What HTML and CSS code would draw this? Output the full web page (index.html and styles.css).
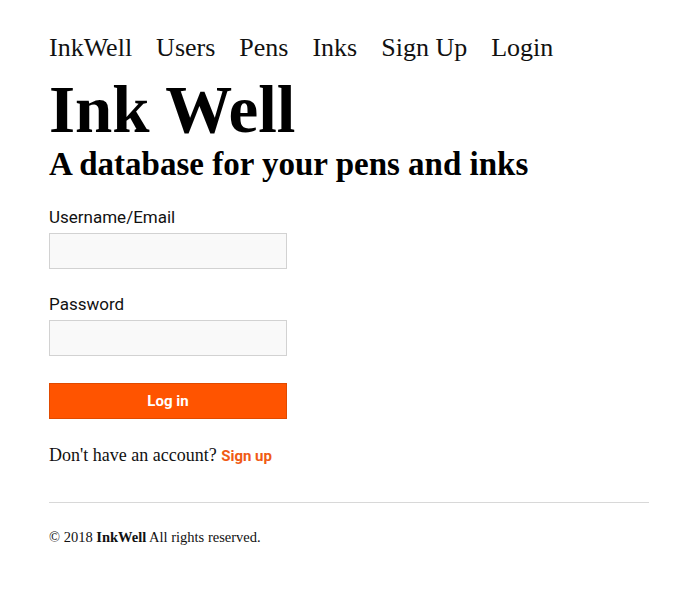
FILE: index.html
```html
<!DOCTYPE html>
<html lang="en">
<head>
<meta charset="utf-8">
<title>InkWell</title>
<link rel="stylesheet" href="styles.css">
</head>
<body>
<div class="page">
  <nav class="nav">
    <a href="#">InkWell</a>
    <a href="#">Users</a>
    <a href="#">Pens</a>
    <a href="#">Inks</a>
    <a href="#">Sign Up</a>
    <a href="#">Login</a>
  </nav>
  <header class="hero">
    <h1 class="title">Ink Well</h1>
    <h2 class="subtitle">A database for your pens and inks</h2>
  </header>
  <form class="form">
    <label class="field">
      <span class="label">Username/Email</span>
      <input class="input" type="text">
    </label>
    <label class="field">
      <span class="label">Password</span>
      <input class="input" type="password">
    </label>
    <button class="btn" type="button">Log in</button>
  </form>
  <p class="signup">Don't have an account? <a href="#" class="signup-link">Sign up</a></p>
  <footer class="footer">
    <p class="copy">© 2018 <strong>InkWell</strong> All rights reserved.</p>
  </footer>
</div>
</body>
</html>
```
FILE: styles.css
```css
* { box-sizing: border-box; }
html, body { margin: 0; padding: 0; background: #fff; }
body { font-family: "Liberation Serif", "Times New Roman", serif; color: #111; }
.page { width: 600px; margin-left: 49px; padding-top: 30px; }
.nav { display: flex; gap: 24px; font-size: 26px; line-height: 36px; }
.nav a { color: #111; text-decoration: none; }
.hero { margin-top: 9px; }
.title { margin: 0; font-size: 67px; font-weight: bold; line-height: 68px; color: #000; }
.subtitle { margin: 0; font-size: 33px; font-weight: bold; line-height: 42px; color: #000; }
.form { margin-top: 23px; width: 238px; display: flex; flex-direction: column; }
.field { display: flex; flex-direction: column; margin-bottom: 26px; }
.label { font-family: Roboto, "Liberation Sans", sans-serif; font-size: 17px; line-height: 19px; color: #111; margin-bottom: 6px; }
.input { height: 36px; width: 238px; border: 1px solid #d2d2d2; background: #f9f9f9; margin: 0; }
.btn { height: 36px; width: 238px; background: #ff5400; border: 1px solid #e04a00; color: #fff; font-family: Roboto, "Liberation Sans", sans-serif; font-weight: bold; font-size: 15px; margin-top: 1px; }
.signup { margin: 24px 0 0; font-size: 18px; line-height: 24px; }
.signup-link { font-family: Roboto, "Liberation Sans", sans-serif; font-weight: bold; font-size: 15px; color: #f05a14; text-decoration: none; }
.footer { margin-top: 34px; border-top: 1px solid #d8d8d8; padding-top: 24px; }
.copy { margin: 0; font-size: 14.5px; line-height: 20px; }
.copy strong { font-weight: bold; }
```
